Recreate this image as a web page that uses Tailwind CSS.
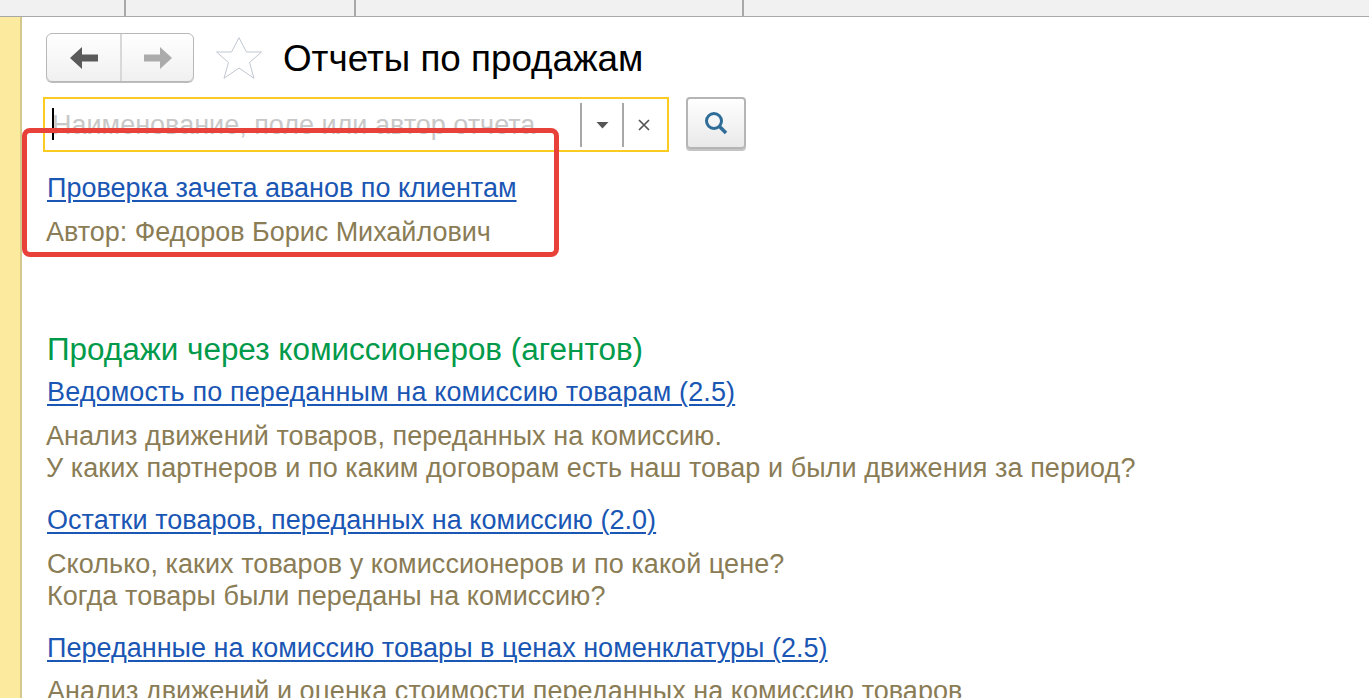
<!DOCTYPE html>
<html><head><meta charset="utf-8"><script src="https://cdn.jsdelivr.net/npm/@tailwindcss/browser@4"></script></head>
<body class="m-0 overflow-hidden bg-white">
<div class="relative flex h-[698px] w-[1369px] flex-col overflow-hidden font-['Liberation_Sans',Arial,sans-serif]">
  <div class="flex h-[17px] shrink-0 border-b border-[#a8a8a8] bg-[#f1f1f1]">
    <div class="w-[126px] border-r-2 border-[#a8a8a8]"></div>
    <div class="w-[230px] border-r-2 border-[#a8a8a8]"></div>
    <div class="w-[388px] border-r-2 border-[#a8a8a8]"></div>
  </div>
  <div class="flex min-h-0 flex-1">
    <div class="w-[22px] shrink-0 border-r-2 border-[#d4c98a] bg-[#fcea9e]"></div>
    <div class="min-w-0 flex-1 pl-[21px]">
      <div class="flex h-[80px] items-start pl-[3px] pt-[16px]">
        <div class="flex h-[49px] w-[148px] rounded-[6px] border border-[#b8b8b8] bg-gradient-to-b from-white to-[#f0f0f0] shadow-[0_1px_0_#bdbdbd]">
          <div class="flex w-[75px] items-center justify-center border-r-2 border-[#d8d8d8]">
            <svg width="28" height="22" viewBox="0 0 28 22"><path d="M0 11 L12 0 V7.5 H28 V14.5 H12 V22 Z" fill="#5a5a5a"/></svg>
          </div>
          <div class="flex flex-1 items-center justify-center">
            <svg width="28" height="22" viewBox="0 0 28 22"><path d="M28 11 L16 0 V7.5 H0 V14.5 H16 V22 Z" fill="#ababab"/></svg>
          </div>
        </div>
        <svg class="ml-[22px] mt-[4px]" width="46" height="42" viewBox="0 0 46 42"><path d="M23 0.7 L30.5 15 L45.5 15 L33.5 25.5 L38 41.3 L23 31 L8 41.3 L12.5 25.5 L0.5 15 L15.5 15 Z" fill="#fff" stroke="#c0c7cf" stroke-width="1"/></svg>
        <div class="ml-[21px] mt-[6px] text-[36.8px] leading-[40px] text-black">Отчеты по продажам</div>
      </div>
      <div class="flex items-start">
        <div class="flex h-[55px] w-[626px] items-center border-2 border-[#fbcb22]">
          <div class="relative flex-1 pl-[7px] pt-[1px] text-[27px] leading-[51px] text-[#c8c8c8]">Наименование, поле или автор отчета
            <span class="absolute left-[7px] top-[9px] h-[32px] w-[2px] bg-black"></span>
          </div>
          <div class="h-[44px] w-[2px] bg-[#a8a8a8]"></div>
          <div class="flex w-[40px] justify-center"><svg width="13" height="8" viewBox="0 0 13 8"><path d="M0.5 1 H12.5 L6.5 7.5 Z" fill="#555"/></svg></div>
          <div class="h-[44px] w-[2px] bg-[#a8a8a8]"></div>
          <div class="flex w-[43px] justify-center pr-[3px]"><svg width="12" height="12" viewBox="0 0 12 12"><path d="M1 1 L11 11 M11 1 L1 11" stroke="#555" stroke-width="1.7"/></svg></div>
        </div>
        <div class="ml-[17px] flex h-[52px] w-[60px] items-center justify-center rounded-[4px] border-2 border-[#b5b5b5] bg-gradient-to-b from-white to-[#e9e9e9] shadow-[0_2px_0_#c4c4c4]">
          <svg width="24" height="24" viewBox="0 0 24 24"><circle cx="10" cy="10" r="7.5" fill="none" stroke="#2f6d98" stroke-width="3"/><path d="M15.5 15.5 L22 22" stroke="#2f6d98" stroke-width="3.5"/></svg>
        </div>
      </div>
      <div class="pl-[4px] text-[27px] leading-[32px]">
        <a class="mt-[20px] block w-max text-[#1a56b4] underline decoration-[2px] underline-offset-[3px]">Проверка зачета аванов по клиентам</a>
        <p class="mt-[12px] -ml-[1px] tracking-[-0.03px] text-[#8a7c55]">Автор: Федоров Борис Михайлович</p>
        <h2 class="mt-[86px] text-[31.45px] text-[#009a4a]">Продажи через комиссионеров (агентов)</h2>
        <a class="mt-[10px] block w-max tracking-[0.12px] text-[#1a56b4] underline decoration-[2px] underline-offset-[3px]">Ведомость по переданным на комиссию товарам (2.5)</a>
        <p class="mt-[12px] -ml-[1px] tracking-[0.06px] text-[#8a7c55]">Анализ движений товаров, переданных на комиссию.<br>У каких партнеров и по каким договорам есть наш товар и были движения за период?</p>
        <a class="mt-[20px] block w-max tracking-[0.05px] text-[#1a56b4] underline decoration-[2px] underline-offset-[3px]">Остатки товаров, переданных на комиссию (2.0)</a>
        <p class="mt-[12px] tracking-[0.06px] text-[#8a7c55]">Сколько, каких товаров у комиссионеров и по какой цене?<br>Когда товары были переданы на комиссию?</p>
        <a class="mt-[20px] block w-max tracking-[0.02px] text-[#1a56b4] underline decoration-[2px] underline-offset-[3px]">Переданные на комиссию товары в ценах номенклатуры (2.5)</a>
        <p class="mt-[11px] tracking-[0.03px] text-[#8a7c55]">Анализ движений и оценка стоимости переданных на комиссию товаров</p>
      </div>
    </div>
  </div>
  <div class="absolute left-[22px] top-[128px] h-[129px] w-[537px] rounded-[8px] border-[5px] border-[#e8413a]"></div>
</div>
</body></html>
